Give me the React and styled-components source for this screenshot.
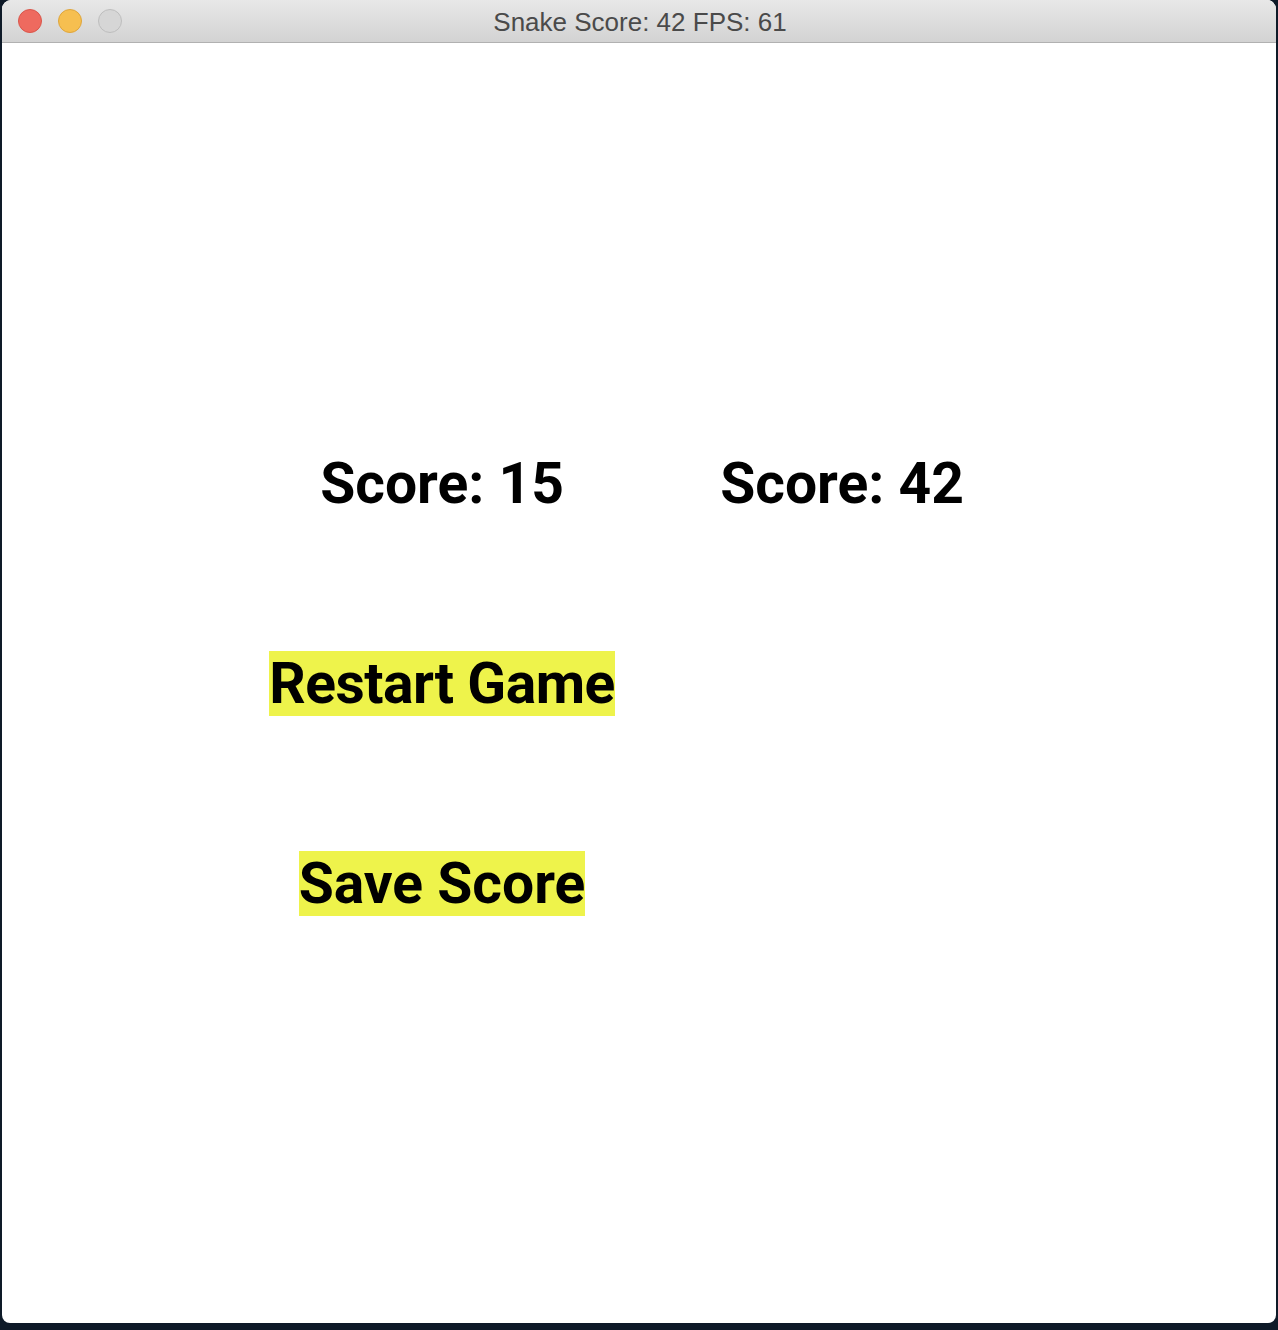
import styled, { createGlobalStyle } from "styled-components";

const GlobalStyle = createGlobalStyle`
	html, body {
		margin: 0;
		padding: 0;
		background: #0e1a28;
	}
	* {
		box-sizing: border-box;
	}
`;

const Desktop = styled.div`
	width: 1278px;
	height: 1330px;
	padding: 0 2px 7px 2px;
	background: #0e1a28;
`;

const Window = styled.div`
	width: 100%;
	height: 100%;
	background: #fff;
	border-radius: 9px 9px 8px 8px;
	overflow: hidden;
	display: flex;
	flex-direction: column;
`;

const TitleBar = styled.div`
	height: 43px;
	flex: none;
	position: relative;
	display: flex;
	align-items: center;
	justify-content: center;
	background: linear-gradient(#e8e8e8, #d3d3d3);
	border-bottom: 1px solid #b1b1b1;
`;

const Lights = styled.div`
	position: absolute;
	left: 16px;
	top: 9px;
	display: flex;
	gap: 16px;
`;

const Light = styled.span`
	width: 24px;
	height: 24px;
	border-radius: 50%;
	background: ${(props) => props.color};
	border: 1px solid ${(props) => props.edge};
`;

const Title = styled.div`
	font-family: "Liberation Sans", Arial, sans-serif;
	font-size: 26px;
	color: #4a4a4a;
	margin-left: 2px;
	margin-top: 3px;
`;

const Canvas = styled.div`
	flex: 1;
	display: grid;
	grid-template-columns: 400px 400px;
	grid-auto-rows: 200px;
	padding: 340px 0 0 240px;
`;

const Cell = styled.div`
	display: flex;
	align-items: center;
	justify-content: center;
`;

const Label = styled.span`
	font-family: Roboto, "Liberation Sans", sans-serif;
	font-weight: 700;
	font-size: 57px;
	line-height: 65px;
	color: #000;
	letter-spacing: ${(props) => (props.tight ? "-0.5px" : "0")};
	background: ${(props) => (props.button ? "#eef34b" : "transparent")};
`;

function App() {
	return (
		<>
			<GlobalStyle />
			<Desktop>
				<Window>
					<TitleBar>
						<Lights>
							<Light color="#ee6a5f" edge="#d9564b" />
							<Light color="#f6bf50" edge="#dea53c" />
							<Light color="#d6d6d6" edge="#bdbdbd" />
						</Lights>
						<Title>Snake Score: 42 FPS: 61</Title>
					</TitleBar>
					<Canvas>
						<Cell>
							<Label>Score: 15</Label>
						</Cell>
						<Cell>
							<Label>Score: 42</Label>
						</Cell>
						<Cell>
							<Label button tight>Restart Game</Label>
						</Cell>
						<Cell />
						<Cell>
							<Label button>Save Score</Label>
						</Cell>
					</Canvas>
				</Window>
			</Desktop>
		</>
	);
}

export default App;
